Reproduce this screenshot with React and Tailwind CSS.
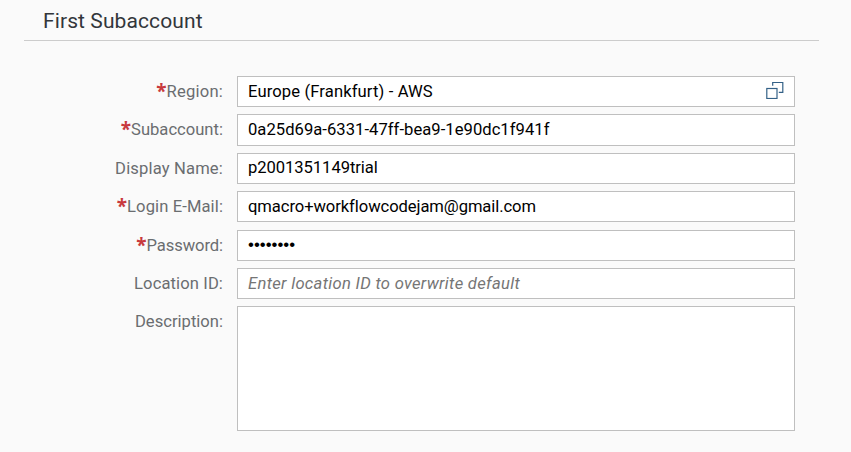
function ValueHelpIcon() {
  return (
    <svg width="18" height="18" viewBox="0 0 18 18" fill="none" stroke="#346187" strokeWidth="1.2" className="-mt-[3px] shrink-0">
      <path d="M6.7 4.8V1.5h10.1v9.9h-4" />
      <rect x=".8" y="7.5" width="10.2" height="10" />
    </svg>
  );
}

const rows = [
  { label: "Region:", tone: "tracking-[0.2px]", required: true, value: "Europe (Frankfurt) - AWS", box: "h-[31px]", gap: "mb-[7px]", text: "tracking-[0.12px]", icon: true },
  { label: "Subaccount:", required: true, value: "0a25d69a-6331-47ff-bea9-1e90dc1f941f", box: "h-8", gap: "mb-[7px]", text: "pb-px tracking-[0.04px]" },
  { label: "Display Name:", tone: "tracking-[0.15px]", value: "p2001351149trial", box: "h-[31px]", gap: "mb-[7px]", text: "pb-px tracking-[-0.06px]" },
  { label: "Login E-Mail:", tone: "tracking-[0.1px]", required: true, value: "qmacro+workflowcodejam@gmail.com", box: "h-[31px]", gap: "mb-2", text: "tracking-[-0.08px]" },
  { label: "Password:", tone: "tracking-[-0.1px]", required: true, value: "••••••••", box: "h-[31px]", gap: "mb-[7px]", text: "-mt-0.5 font-['Liberation_Sans',sans-serif] text-[16.8px]" },
  { label: "Location ID:", tone: "tracking-[0.1px]", value: "Enter location ID to overwrite default", box: "h-[31px]", gap: "mb-[7px]", text: "italic tracking-[0.3px] text-[#757575]" },
  { label: "Description:", value: "", box: "h-[125px]", gap: "" },
];

function Field({ label, tone = "", required, value, box, gap, icon, text = "" }) {
  return (
    <div className={`flex items-start ${gap}`}>
      <div className="flex h-[31px] w-[223px] shrink-0 items-center justify-end whitespace-nowrap text-[#6a6d70]">
        {required && (
          <span className="-mt-px font-['Noto_Sans',sans-serif] text-[19px] leading-none font-bold text-[#c8393d]">*</span>
        )}
        <span className={tone}>{label}</span>
      </div>
      <div className={`ml-[14px] flex w-[558px] items-center justify-between border border-[#bfbfbf] bg-white pr-[10px] pl-[10px] text-black ${box}`}>
        <span className={`whitespace-nowrap ${text}`}>{value}</span>
        {icon && <ValueHelpIcon />}
      </div>
    </div>
  );
}

export default function App() {
  return (
    <main className="h-[452px] w-[851px] overflow-hidden bg-[#fafafa] font-['Roboto',sans-serif] text-[16.6px] leading-5">
      <header className="mx-6 h-[41px] w-[795px] border-b border-[#ccc] pl-[19px]">
        <h1 className="pt-px text-[21px] leading-[40px] tracking-[0.1px] text-[#32363a]">First Subaccount</h1>
      </header>
      <section className="pt-[35px]">
        {rows.map((row) => (
          <Field key={row.label} {...row} />
        ))}
      </section>
    </main>
  );
}
